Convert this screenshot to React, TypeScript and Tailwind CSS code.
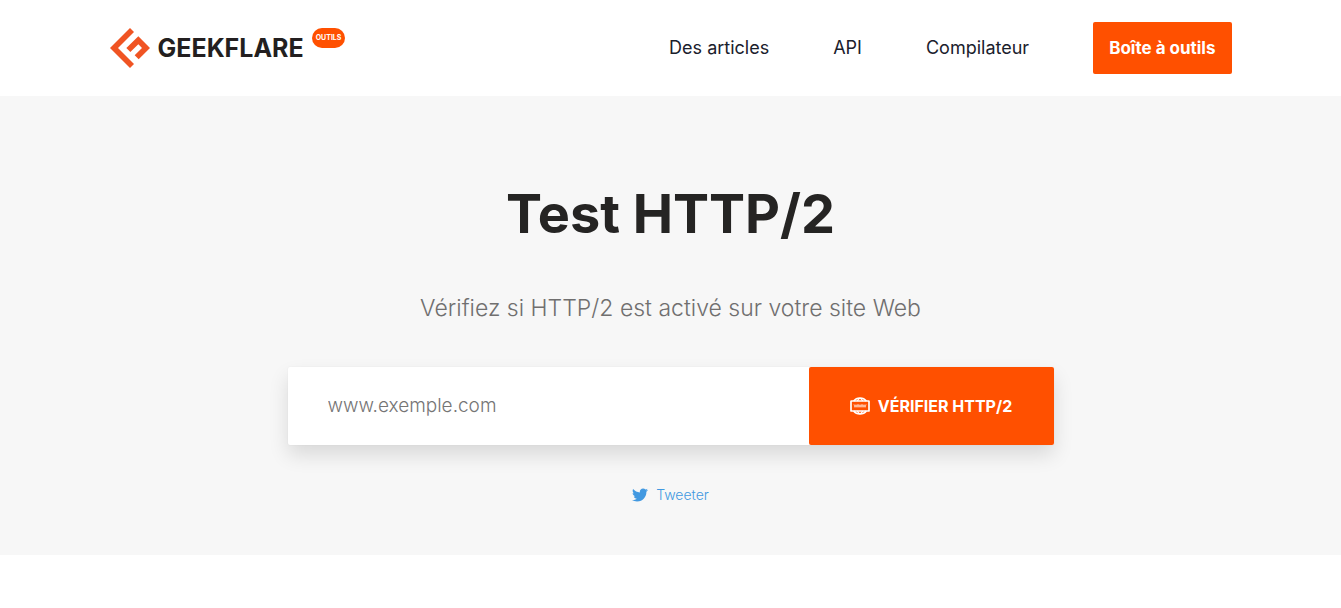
import { FaTwitter } from "react-icons/fa"

const links = [
  { label: "Des articles", href: "#articles" },
  { label: "API", href: "#api" },
  { label: "Compilateur", href: "#compilateur" },
]

function LogoMark() {
  return (
    <svg viewBox="0 0 120 120" className="h-10 w-10 shrink-0" fill="#f05423" aria-hidden="true">
      <path d="M60 0L72 12L24 60L72 108L60 120L0 60Z" />
      <path d="M85 25L120 60L86 94L74 82L96 60L85 49L61 72L49 60Z" />
    </svg>
  )
}

function WwwIcon() {
  return (
    <svg viewBox="0 0 60 54" className="h-[18px] w-5 shrink-0" fill="none" stroke="white" aria-hidden="true">
      <rect x="3" y="12" width="54" height="30" rx="1" strokeWidth="5" />
      <path d="M11 12C20 0 40 0 49 12M11 42C20 54 40 54 49 42" strokeWidth="5" />
      <path d="M22 12Q30 -4 38 12M22 42Q30 58 38 42" strokeWidth="4" />
      <path d="M12 22l3 9 3-8 3 8 3-9M24 22l3 9 3-8 3 8 3-9M36 22l3 9 3-8 3 8 3-9" strokeWidth="2" />
    </svg>
  )
}

function Header() {
  return (
    <header className="bg-white">
      <div className="mx-auto flex h-24 max-w-[1122px] items-center justify-between">
        <a href="#accueil" className="flex items-center" aria-label="Geekflare Outils">
          <LogoMark />
          <span className="ml-2 text-[25px] leading-10 font-bold text-[#231f20]">GEEKFLARE</span>
          <span className="ml-2 flex h-5 items-center self-start rounded-full bg-[#ff5000] px-1 text-[7px] font-bold text-white">
            OUTILS
          </span>
        </a>
        <nav className="flex items-center gap-16 text-lg text-[#1a202c]">
          {links.map((link) => (
            <a key={link.label} href={link.href}>{link.label}</a>
          ))}
          <a href="#outils" className="flex h-[52px] items-center rounded-xs bg-[#ff5000] px-4 text-[17px] font-bold text-white">
            Boîte à outils
          </a>
        </nav>
      </div>
    </header>
  )
}

export default function App() {
  return (
    <div className="bg-white font-['Inter',sans-serif]">
      <Header />
      <main className="flex flex-col items-center bg-[#f7f7f7] px-4 pt-20 pb-[50px]">
        <h1 className="text-[54px] leading-[76px] font-bold text-[#252423]">Test HTTP/2</h1>
        <p className="mt-9 text-[23px] leading-10 font-light text-[#706f6f]">
          Vérifiez si HTTP/2 est activé sur votre site Web
        </p>
        <form
          className="mt-[39px] flex h-[78px] w-full max-w-[766px] rounded-xs bg-white shadow-[0_0_2px_rgba(0,0,0,0.06),0_10px_20px_rgba(0,0,0,0.12)]"
          onSubmit={(e) => e.preventDefault()}
        >
          <input
            type="text"
            aria-label="Adresse du site"
            placeholder="www.exemple.com"
            className="min-w-0 flex-1 px-10 text-[19px] font-light text-[#706f6f] outline-none placeholder:text-[#757575]"
          />
          <button type="submit" className="flex w-[245px] items-center justify-center gap-2 rounded-xs bg-[#ff5000] font-bold text-white">
            <WwwIcon />
            VÉRIFIER HTTP/2
          </button>
        </form>
        <a href="#tweeter" className="mt-10 flex items-center gap-2 text-sm font-light text-[#4299e1]">
          <FaTwitter className="h-4 w-4" />
          Tweeter
        </a>
      </main>
    </div>
  )
}
